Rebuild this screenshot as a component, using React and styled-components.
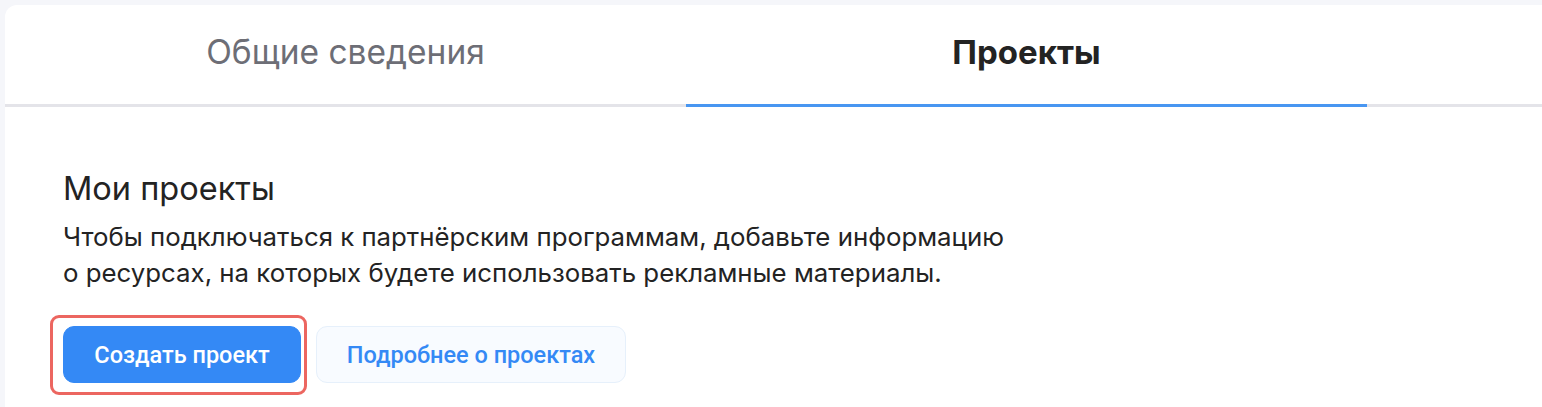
import React from "react";
import styled, { createGlobalStyle } from "styled-components";

const Global = createGlobalStyle`
  html, body { margin: 0; padding: 0; background: #f5f6fa; overflow: hidden; }
  body { font-family: Inter, Roboto, "Noto Sans", Arial, sans-serif; }
  * { box-sizing: border-box; }
`;

const Page = styled.div`
  padding: 5px 0 0 5px;
  min-height: 407px;
`;

const Card = styled.div`
  width: 1580px;
  min-height: 420px;
  background: #ffffff;
  border-radius: 12px 0 0 0;
`;

const TabBar = styled.div`
  display: flex;
  border-bottom: 3px solid #e4e4e9;
`;

const Tab = styled.div`
  width: 681px;
  height: 102px;
  margin-bottom: -3px;
  display: flex;
  align-items: center;
  justify-content: center;
  font-size: ${(p) => (p.$active ? "33px" : "33.5px")};
  font-weight: ${(p) => (p.$active ? 700 : 400)};
  color: ${(p) => (p.$active ? "#232323" : "#6d6e76")};
  border-bottom: 3px solid ${(p) => (p.$active ? "#4896f1" : "transparent")};
  padding-bottom: 5px;
`;

const Content = styled.div`
  padding: 62px 0 0 58px;
`;

const Title = styled.h2`
  margin: 0;
  font-size: 32.5px;
  line-height: 40px;
  font-weight: 400;
  color: #232323;
`;

const Text = styled.p`
  margin: 10px 0 0;
  max-width: 955px;
  font-size: 25.8px;
  line-height: 36px;
  color: #232323;
`;

const Actions = styled.div`
  display: flex;
  align-items: center;
  gap: 15px;
  margin-top: 35px;
`;

const Highlight = styled.div`
  position: relative;
  &::after {
    content: "";
    position: absolute;
    top: -11px;
    left: -13px;
    right: -6px;
    bottom: -12px;
    border: 3px solid #ec6660;
    border-radius: 9px;
    pointer-events: none;
  }
`;

const Button = styled.button`
  height: 57px;
  width: ${(p) => (p.$primary ? "238px" : "310px")};
  padding: 0;
  border-radius: 11px;
  font-family: Roboto, "Noto Sans", Arial, sans-serif;
  font-size: 23.5px;
  font-weight: 500;
  cursor: pointer;
  background: ${(p) => (p.$primary ? "#3489f5" : "#f8fbff")};
  color: ${(p) => (p.$primary ? "#ffffff" : "#3489f5")};
  border: 1px solid ${(p) => (p.$primary ? "#3489f5" : "#e6f0fb")};
`;

export default function App() {
  return (
    <>
      <Global />
      <Page>
        <Card>
          <TabBar>
            <Tab>Общие сведения</Tab>
            <Tab $active>Проекты</Tab>
          </TabBar>
          <Content>
            <Title>Мои проекты</Title>
            <Text>
              Чтобы подключаться к партнёрским программам, добавьте информацию
              о ресурсах, на которых будете использовать рекламные материалы.
            </Text>
            <Actions>
              <Highlight>
                <Button $primary>Создать проект</Button>
              </Highlight>
              <Button>Подробнее о проектах</Button>
            </Actions>
          </Content>
        </Card>
      </Page>
    </>
  );
}
